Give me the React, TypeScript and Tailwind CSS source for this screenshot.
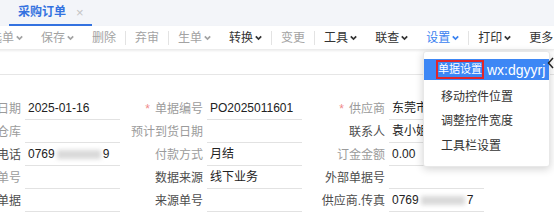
import React from 'react';

const font = { fontFamily: '"Liberation Sans", "Noto Sans CJK SC", sans-serif' };

function Chevron() {
  return (
    <svg width="7" height="6" viewBox="0 0 7 6" className="ml-[2px] mt-[1px] shrink-0">
      <path d="M0.8 1.3 L3.5 4.1 L6.2 1.3" fill="none" stroke="currentColor" strokeWidth="1.7" />
    </svg>
  );
}

type Tool = { label: string; chev?: boolean; tone: 'dim' | 'dark' | 'blue'; sep?: boolean };

const tools: Tool[] = [
  { label: '选单', chev: true, tone: 'dim' },
  { label: '保存', chev: true, tone: 'dim' },
  { label: '删除', tone: 'dim', sep: true },
  { label: '弃审', tone: 'dim', sep: true },
  { label: '生单', chev: true, tone: 'dim' },
  { label: '转换', chev: true, tone: 'dark', sep: true },
  { label: '变更', tone: 'dim', sep: true },
  { label: '工具', chev: true, tone: 'dark' },
  { label: '联查', chev: true, tone: 'dark' },
  { label: '设置', chev: true, tone: 'blue', sep: true },
  { label: '打印', chev: true, tone: 'dark' },
  { label: '更多', chev: true, tone: 'dark' },
];

const toneClass = {
  dim: 'text-[#a3a3a3]',
  dark: 'text-[#333333]',
  blue: 'text-[#3b82f0]',
};

type Cell = { label: string; req?: boolean; value?: React.ReactNode; dark?: boolean };

function Blurred({ head, tail }: { head: string; tail: string }) {
  return (
    <span className="flex items-center">
      <span>{head}</span>
      <span className="inline-block w-[44px] h-[9px] bg-[#d9d9d9] blur-[2px] mx-[2px]" />
      <span>{tail}</span>
    </span>
  );
}

const rows: Cell[][] = [
  [
    { label: '日期', value: '2025-01-16' },
    { label: '单据编号', req: true, value: 'PO2025011601' },
    { label: '供应商', req: true, value: '东莞市电子有限公司' },
  ],
  [
    { label: '仓库' },
    { label: '预计到货日期' },
    { label: '联系人', value: '袁小姐', dark: true },
  ],
  [
    { label: '电话', value: <Blurred head="0769" tail="9" />, dark: true },
    { label: '付款方式', value: '月结' },
    { label: '订金金额', value: '0.00' },
  ],
  [
    { label: '单号' },
    { label: '数据来源', value: '线下业务', dark: true },
    { label: '外部单据号', dark: true },
  ],
  [
    { label: '单据', dark: true },
    { label: '来源单号', dark: true },
    { label: '供应商.传真', value: <Blurred head="0769" tail="7" />, dark: true },
  ],
];

export default function App() {
  return (
    <div className="relative w-[554px] h-[214px] overflow-hidden bg-white text-[12px]" style={font}>
      {/* tab bar */}
      <div className="h-[26px] bg-[#f3f5f9] flex items-end">
        <div className="ml-[9px] w-[83px] h-[26px] flex items-center border-b-2 border-[#3372e0]">
          <span className="ml-[9px] font-bold text-[#3372e0] leading-none whitespace-nowrap">采购订单</span>
          <span className="ml-[10px] text-[#c4c4c4] text-[13px] leading-none">×</span>
        </div>
      </div>

      {/* toolbar */}
      <div className="h-[24px] bg-white flex items-center ml-[-19px] shadow-[0_1px_2px_rgba(0,0,0,0.08)] border-b border-[#ececec]">
        {tools.map((t) => (
          <React.Fragment key={t.label}>
            <div
              className={`flex shrink-0 items-center px-[9px] leading-none whitespace-nowrap ${toneClass[t.tone]}`}
            >
              <span>{t.label}</span>
              {t.chev && <Chevron />}
            </div>
            {t.sep && <div className="w-px shrink-0 h-[14px] bg-[#e3e3e3]" />}
          </React.Fragment>
        ))}
      </div>

      {/* blank strip */}
      <div className="h-[25px] border-b border-[#e6e6e6]" />

      {/* form */}
      <div className="pt-[22px] ml-[-62px] grid grid-cols-[repeat(3,182px)]">
        {rows.map((row, ri) =>
          row.map((c, ci) => (
            <div key={`${ri}-${ci}`} className="flex h-[23px] items-center">
              <div
                className={`w-[87px] shrink-0 pr-[4px] text-right whitespace-nowrap ${c.dark ? 'text-[#4d4d4d]' : 'text-[#9b9b9b]'}`}
              >
                {c.req && <span className="text-[#f08a8a] mr-[5px]">*</span>}
                {c.label}
              </div>
              <div className="w-[95px] shrink-0 h-[23px] flex items-center border-b border-[#e2e2e2] pl-[3px] text-[#222] whitespace-nowrap overflow-hidden">
                {c.value}
              </div>
            </div>
          )),
        )}
      </div>

      {/* dropdown menu */}
      <div className="absolute left-[423px] top-[51px] w-[127px] h-[116px] bg-white rounded-[3px] shadow-[0_2px_8px_rgba(0,0,0,0.18)] border border-[#e8e8e8] pt-[7px]">
        <div className="h-[21px] bg-[#3d87f5] flex items-center whitespace-nowrap overflow-hidden">
          <span className="ml-[12px] h-[19px] flex items-center border-2 border-[#e0262b] text-white text-[11px] leading-none">
            单据设置
          </span>
          <span className="ml-[3px] text-white text-[14px] leading-none">wx:dgyyrj</span>
        </div>
        <div className="pl-[17px] text-[#333] text-[12px]">
          <div className="h-[24px] flex items-center mt-[5px]">移动控件位置</div>
          <div className="h-[24px] flex items-center">调整控件宽度</div>
          <div className="h-[25px] flex items-center">工具栏设置</div>
        </div>
      </div>

      {/* collapse arrow */}
      <svg className="absolute left-[547px] top-[57px]" width="7" height="12" viewBox="0 0 7 12">
        <path d="M6 1 L1.5 6 L6 11" fill="none" stroke="#222" strokeWidth="1.5" />
      </svg>
    </div>
  );
}
